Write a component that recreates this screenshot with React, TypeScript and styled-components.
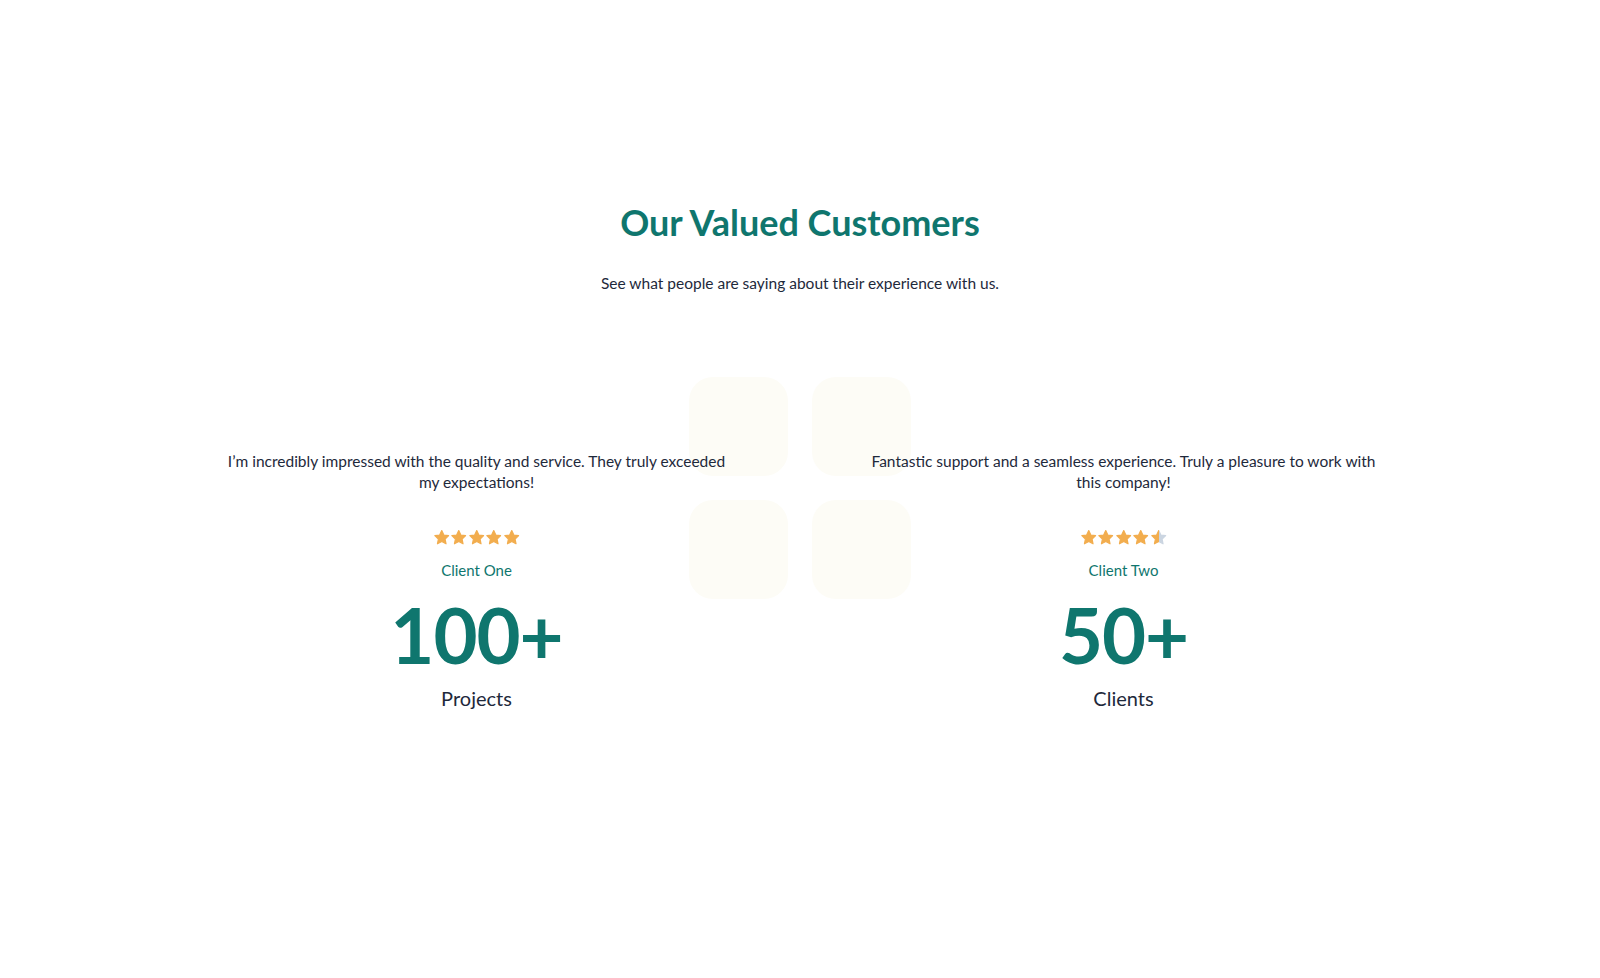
import React from 'react';
import styled, { createGlobalStyle } from 'styled-components';

const GlobalStyle = createGlobalStyle`
  html, body {
    margin: 0;
    padding: 0;
    background: #ffffff;
  }
  body {
    font-family: 'Lato', 'Noto Sans', sans-serif;
    color: #1f2937;
  }
`;

const Section = styled.section`
  position: relative;
  min-height: 978px;
  padding-top: 200px;
  box-sizing: border-box;
`;

const Header = styled.div`
  text-align: center;
`;

const Title = styled.h2`
  margin: 0;
  font-size: 36px;
  line-height: 44px;
  font-weight: 700;
  color: #0f766e;
`;

const Subtitle = styled.p`
  margin: 27px 0 0;
  font-size: 15.5px;
  line-height: 24px;
  color: #1e293b;
`;

const Body = styled.div`
  position: relative;
  margin-top: 156px;
`;

const Decor = styled.div`
  position: absolute;
  left: 50%;
  top: -74px;
  transform: translateX(-50%);
  display: grid;
  grid-template-columns: repeat(2, 99px);
  gap: 24px;
  z-index: 0;
`;

const Tile = styled.div`
  width: 99px;
  height: 99px;
  border-radius: 24px;
  background: #fdfcf6;
`;

const Grid = styled.div`
  position: relative;
  z-index: 1;
  display: grid;
  grid-template-columns: repeat(2, 583px);
  column-gap: 64px;
  justify-content: center;
`;

const Column = styled.div`
  display: flex;
  flex-direction: column;
  align-items: center;
  text-align: center;
`;

const Quote = styled.p`
  margin: 0;
  max-width: 512px;
  font-size: 15.5px;
  line-height: 21px;
  color: #1e293b;
`;

const Stars = styled.div`
  display: flex;
  margin-top: 36px;
`;

const Name = styled.div`
  margin-top: 12px;
  font-size: 15px;
  line-height: 22px;
  color: #0f766e;
`;

const Stat = styled.div`
  margin-top: 12px;
  font-size: 76px;
  line-height: 84px;
  font-weight: 700;
  letter-spacing: -1px;
  color: #0f766e;
`;

const StatLabel = styled.div`
  margin-top: 7px;
  font-size: 20px;
  line-height: 28px;
  color: #1e293b;
`;

const STAR =
  'M12 2.2l2.9 6.1 6.6.8-4.9 4.6 1.3 6.6L12 17l-5.9 3.3 1.3-6.6-4.9-4.6 6.6-.8z';

const Star = ({ fill, id }: { fill: number; id: string }) => (
  <svg width="17.5" height="17.5" viewBox="0 0 24 24">
    <defs>
      <linearGradient id={id}>
        <stop offset={`${fill * 100}%`} stopColor="#f2ad4e" />
        <stop offset={`${fill * 100}%`} stopColor="#cbd5e1" />
      </linearGradient>
    </defs>
    <path
      d={STAR}
      fill={`url(#${id})`}
      stroke={`url(#${id})`}
      strokeWidth="1.6"
      strokeLinejoin="round"
    />
  </svg>
);

const Rating = ({ value, name }: { value: number; name: string }) => (
  <Stars>
    {[0, 1, 2, 3, 4].map((i) => (
      <Star
        key={i}
        id={`star-${name.replace(/\s/g, '')}-${i}`}
        fill={Math.max(0, Math.min(1, value - i))}
      />
    ))}
  </Stars>
);

const testimonials = [
  {
    quote:
      'I\u2019m incredibly impressed with the quality and service. They truly exceeded my expectations!',
    rating: 5,
    name: 'Client One',
    stat: '100+',
    label: 'Projects',
  },
  {
    quote:
      'Fantastic support and a seamless experience. Truly a pleasure to work with this company!',
    rating: 4.5,
    name: 'Client Two',
    stat: '50+',
    label: 'Clients',
  },
];

const App = () => {
  return (
    <>
      <GlobalStyle />
      <Section>
        <Header>
          <Title>Our Valued Customers</Title>
          <Subtitle>See what people are saying about their experience with us.</Subtitle>
        </Header>
        <Body>
          <Decor>
            <Tile />
            <Tile />
            <Tile />
            <Tile />
          </Decor>
          <Grid>
            {testimonials.map((t) => (
              <Column key={t.name}>
                <Quote>{t.quote}</Quote>
                <Rating value={t.rating} name={t.name} />
                <Name>{t.name}</Name>
                <Stat>{t.stat}</Stat>
                <StatLabel>{t.label}</StatLabel>
              </Column>
            ))}
          </Grid>
        </Body>
      </Section>
    </>
  );
};

export default App;
